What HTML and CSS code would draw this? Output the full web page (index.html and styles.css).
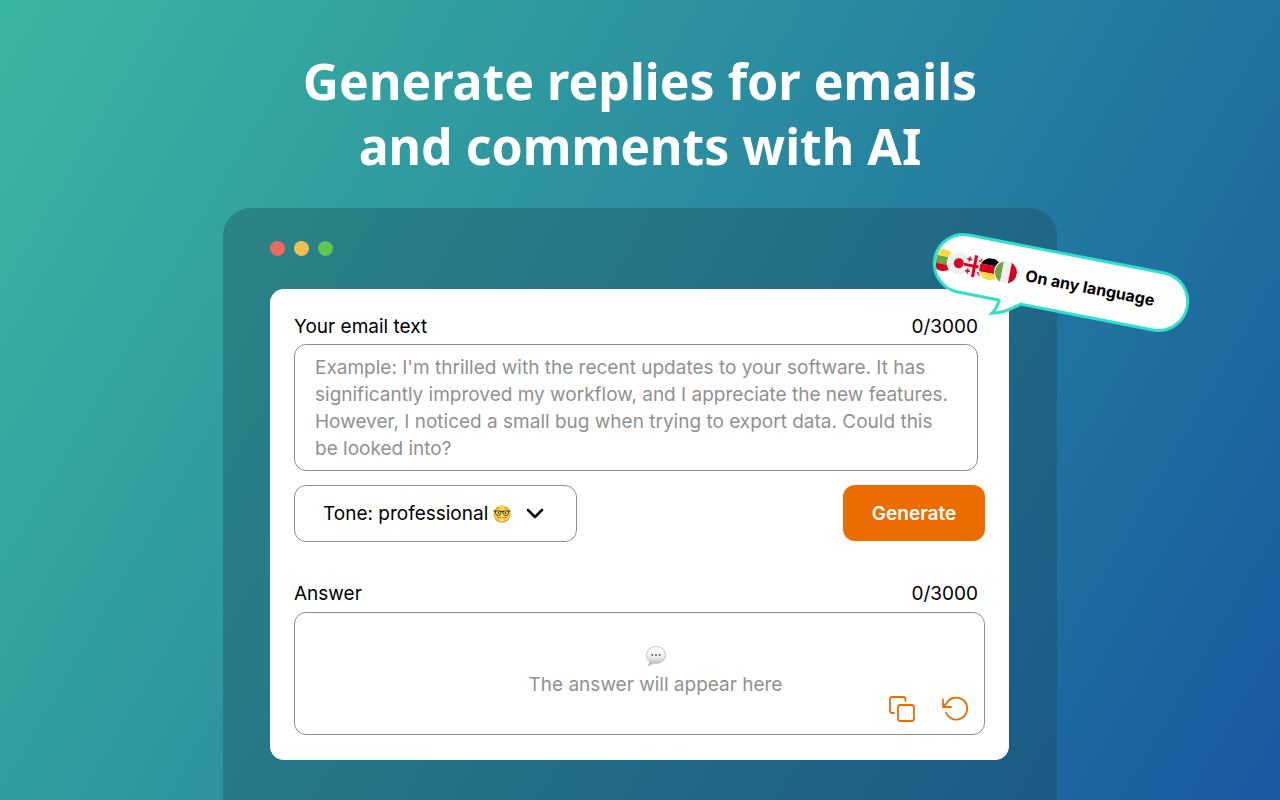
FILE: index.html
```
<!DOCTYPE html>
<html lang="en">
  <head>
    <meta charset="UTF-8" />
    <meta name="viewport" content="width=device-width, initial-scale=1.0" />
    <title>Generate replies with AI</title>
    <link rel="stylesheet" href="styles.css">
  </head>
  <body>
    <h1 class="title">Generate replies for emails<br />and comments with AI</h1>

    <main class="window">
      <div class="dots">
        <span class="dot red"></span>
        <span class="dot yellow"></span>
        <span class="dot green"></span>
      </div>

      <form class="card">
        <div class="row">
          <label for="email">Your email text</label>
          <span>0/3000</span>
        </div>
        <textarea class="email" id="email" maxlength="3000" placeholder="Example: I'm thrilled with the recent updates to your software. It has significantly improved my workflow, and I appreciate the new features. However, I noticed a small bug when trying to export data. Could this be looked into?"></textarea>

        <div class="actions">
          <div class="tone">
            <select class="tone-select" aria-label="Tone">
              <option>Tone: professional</option>
            </select>
            <svg class="emoji" viewBox="0 0 36 36" aria-hidden="true">
              <defs>
                <radialGradient id="face" cx="50%" cy="42%" r="58%">
                  <stop offset="0" stop-color="#ffe85e" />
                  <stop offset="0.7" stop-color="#fdcb38" />
                  <stop offset="1" stop-color="#f09a1c" />
                </radialGradient>
              </defs>
              <circle cx="18" cy="18" r="17.5" fill="url(#face)" />
              <path d="M6 8q3-3 7-2M23 6q4-1 7 2" fill="none" stroke="#a8701c" stroke-width="1.4" />
              <path d="M5 12h11v4q-1 5-5.500 5T5 16zM20 12h11v4q0 5-5 5t-6-5z" fill="#ffe98c" stroke="#3b2a14" stroke-width="1.800" stroke-linejoin="round" />
              <path d="M1 12h5M30 12h5M15 13h6" fill="none" stroke="#3b2a14" stroke-width="2" />
              <circle cx="11" cy="16" r="1.800" fill="#5a3a10" />
              <circle cx="25" cy="16" r="1.800" fill="#5a3a10" />
              <path d="M9 24q9 6 18 0" fill="none" stroke="#a05a14" stroke-width="1.600" />
              <path d="M15 27h6v5h-6z" fill="#fff" />
            </svg>
            <svg class="chevron" viewBox="0 0 18 12" aria-hidden="true">
              <path d="M2 2l7 7 7-7" fill="none" stroke="#000" stroke-width="2.500" stroke-linecap="round" stroke-linejoin="round" />
            </svg>
          </div>
          <button class="generate" type="button">Generate</button>
        </div>

        <div class="row">
          <span>Answer</span>
          <span>0/3000</span>
        </div>
        <div class="answer">
          <div class="empty">
            <svg class="bubble" viewBox="0 0 38 38" aria-hidden="true">
              <defs>
                <linearGradient id="cloud" x1="0" y1="0" x2="0" y2="1">
                  <stop offset="0" stop-color="#fff" />
                  <stop offset="0.5" stop-color="#f2f2f2" />
                  <stop offset="1" stop-color="#b5b5b5" />
                </linearGradient>
              </defs>
              <path d="M19 1C9 1 1 8 1 17c0 5 2 9 6 12 0 3-1 6-3 8 4 0 7-2 9-5 2 1 4 1 6 1 10 0 18-7 18-16S29 1 19 1z" fill="url(#cloud)" stroke="#b0b0b0" stroke-width="1.400" />
              <g fill="#555">
                <circle cx="12" cy="17" r="1.800" />
                <circle cx="19" cy="17" r="1.800" />
                <circle cx="26" cy="17" r="1.800" />
              </g>
            </svg>
            <p>The answer will appear here</p>
          </div>
          <div class="tools">
            <button class="tool" type="button" aria-label="Copy">
              <svg viewBox="0 0 28 28">
                <rect x="10" y="10" width="16" height="16" rx="2.500" />
                <path d="M6 18H4.500A2.500 2.500 0 0 1 2 15.500v-11A2.500 2.500 0 0 1 4.500 2h10.500A2.500 2.500 0 0 1 17.500 4.500V6" />
              </svg>
            </button>
            <button class="tool" type="button" aria-label="Regenerate">
              <svg viewBox="0 0 28 28">
                <path d="M2 4.500v7.500h8M2.500 11.500l3-3A11 11 0 1 1 5 17.500" />
              </svg>
            </button>
          </div>
        </div>
      </form>

      <div class="tag">
        <div class="tag-body">
          <svg class="flags" viewBox="0 0 82 24" aria-hidden="true">
            <defs>
              <clipPath id="round"><circle r="11" /></clipPath>
            </defs>
            <g transform="translate(7 12)">
              <g clip-path="url(#round)">
                <path d="M-11-11h22v7h-22z" fill="#ffda44" />
                <path d="M-11-4h22v8h-22z" fill="#6da544" />
                <path d="M-11 4h22v7h-22z" fill="#d80027" />
              </g>
            </g>
            <g transform="translate(23 12)">
              <circle r="12" fill="#fff" />
              <circle r="11" fill="#f0f0f0" />
              <circle r="5" fill="#d80027" />
            </g>
            <g transform="translate(39 12)">
              <circle r="11" fill="#f0f0f0" />
              <path d="M-1.500-11h3v9.500H11v3H1.500V11h-3V1.500H-11v-3h9.500z" fill="#d80027" />
              <path d="M-6-8.500v5M-8.500-6h5M6-8.500v5M3.500-6h5M-6 3.500v5M-8.500 6h5M6 3.500v5M3.500 6h5" stroke="#d80027" stroke-width="1.500" />
            </g>
            <g transform="translate(55 12)">
              <circle r="12" fill="#fff" />
              <g clip-path="url(#round)">
                <path d="M-11-11h22v7h-22z" fill="#000" />
                <path d="M-11-4h22v8h-22z" fill="#d80027" />
                <path d="M-11 4h22v7h-22z" fill="#ffda44" />
              </g>
            </g>
            <g transform="translate(71 12)">
              <circle r="12" fill="#fff" />
              <g clip-path="url(#round)">
                <path d="M-11-11h7v22h-7z" fill="#6da544" />
                <path d="M-4-11h8v22h-8z" fill="#f0f0f0" />
                <path d="M4-11h7v22H4z" fill="#d80027" />
              </g>
            </g>
          </svg>
          <span>On any language</span>
        </div>
        <svg class="tail" viewBox="0 0 36 22" aria-hidden="true">
          <path d="M9 0V3Q8 11 4 17 17 14 30 3V0z" fill="#fff" />
          <path d="M9 2Q8 11 4 17 17 14 31 2" fill="none" stroke="#2fe0cb" stroke-width="3" stroke-linejoin="miter" />
        </svg>
      </div>
    </main>
  </body>
</html>
```
FILE: styles.css
```
* {
  box-sizing: border-box;
}

body {
  display: flex;
  flex-direction: column;
  align-items: center;
  min-height: 100vh;
  margin: 0;
  padding: 49px 24px 0;
  overflow: hidden;
  background: linear-gradient(120deg, #39b6a0, #2a8ba0 48%, #1859a0);
  font-family: Inter, "Liberation Sans", sans-serif;
  font-size: 19px;
  line-height: 27px;
  color: #000;
}

.title {
  margin: 0;
  color: #fff;
  font-family: "Noto Sans", sans-serif;
  font-size: 50px;
  font-weight: 700;
  line-height: 65px;
  text-align: center;
}

.window {
  position: relative;
  flex: 1;
  width: 100%;
  max-width: 834px;
  margin-top: 29px;
  padding: 33px 48px 40px 47px;
  border-radius: 28px 28px 0 0;
  background: rgba(26, 70, 84, 0.34);
}

.dots {
  display: flex;
  gap: 9px;
}
.dot {
  width: 15px;
  height: 15px;
  border-radius: 50%;
}
.red {
  background: #ed6a5e;
}
.yellow {
  background: #f5bf4f;
}
.green {
  background: #61c554;
}

.card {
  margin-top: 33px;
  padding: 24px 24px 25px;
  border-radius: 14px;
  background: #fff;
}

.row {
  display: flex;
  justify-content: space-between;
  padding-right: 7px;
}

.email {
  display: block;
  width: calc(100% - 7px);
  height: 127px;
  margin-top: 4px;
  padding: 9px 20px 8px;
  border: 1px solid #8c8c8c;
  border-radius: 12px;
  background: #fff;
  font: inherit;
  resize: none;
}
.email::placeholder {
  color: #919191;
  opacity: 1;
}

.actions {
  display: flex;
  justify-content: space-between;
  align-items: flex-start;
  margin: 14px 0 38px;
}

.tone {
  display: flex;
  align-items: center;
  height: 57px;
  padding: 0 32px 0 28px;
  border: 1px solid #8c8c8c;
  border-radius: 12px;
}
.tone-select {
  appearance: none;
  padding: 0;
  border: 0;
  background: none;
  color: inherit;
  font: inherit;
}
.emoji {
  width: 18px;
  height: 18px;
  margin-left: 4px;
}
.chevron {
  width: 18px;
  height: 12px;
  margin-left: 15px;
}

.generate {
  width: 142px;
  height: 56px;
  border: 0;
  border-radius: 12px;
  background: #ed6c00;
  color: #fff;
  font: inherit;
  font-weight: 600;
  cursor: pointer;
}

.answer {
  position: relative;
  height: 123px;
  margin-top: 5px;
  padding: 33px 0 0 32px;
  border: 1px solid #8c8c8c;
  border-radius: 12px;
}
.empty {
  display: flex;
  flex-direction: column;
  align-items: center;
  gap: 5px;
  color: #919191;
}
.empty p {
  margin: 0;
}
.bubble {
  width: 20px;
  height: 20px;
}

.tools {
  position: absolute;
  right: 15px;
  bottom: 11px;
  display: flex;
  gap: 25px;
}
.tool {
  width: 28px;
  height: 28px;
  padding: 0;
  border: 0;
  background: none;
  cursor: pointer;
}
.tool svg {
  display: block;
  fill: none;
  stroke: #ed6c00;
  stroke-width: 1.8;
  stroke-linecap: round;
  stroke-linejoin: round;
}

/* speech bubble over the window corner */
.tag {
  position: absolute;
  top: 44px;
  right: -134px;
  width: 260px;
  transform: rotate(11deg);
}
.tag-body {
  display: flex;
  align-items: center;
  gap: 9px;
  height: 61px;
  overflow: hidden;
  border: 3px solid #2fe0cb;
  border-radius: 31px;
  background: #fff;
  font-size: 16px;
  font-weight: 700;
  white-space: nowrap;
}
.flags {
  flex: none;
  width: 82px;
  height: 24px;
}
.tail {
  position: absolute;
  top: 57px;
  left: 64px;
  width: 36px;
  height: 22px;
}
```
